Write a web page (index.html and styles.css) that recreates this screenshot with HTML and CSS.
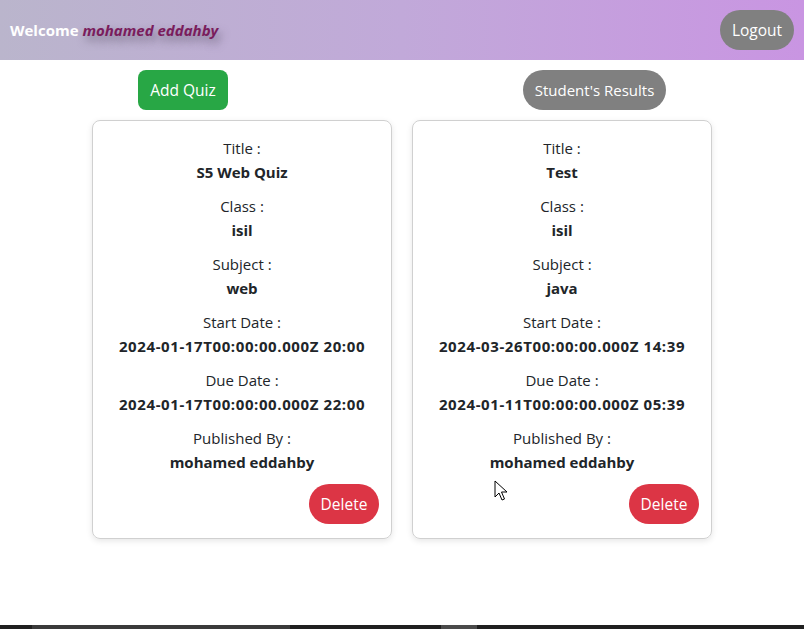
FILE: index.html
```html
<!DOCTYPE html>
<html>
<head>
<meta charset="utf-8">
<link rel="stylesheet" href="styles.css">
</head>
<body>
<div class="app">
  <header class="topbar">
    <div class="welcome">Welcome <span class="name">mohamed eddahby</span></div>
    <button class="btn btn-logout">Logout</button>
  </header>
  <main class="main">
    <div class="actions">
      <button class="btn btn-add">Add Quiz</button>
      <button class="btn btn-results">Student's Results</button>
    </div>
    <div class="cards">
      <div class="card">
        <div class="field"><div class="label">Title :</div><div class="value">S5 Web Quiz</div></div>
        <div class="field"><div class="label">Class :</div><div class="value">isil</div></div>
        <div class="field"><div class="label">Subject :</div><div class="value">web</div></div>
        <div class="field"><div class="label">Start Date :</div><div class="value date">2024-01-17T00:00:00.000Z 20:00</div></div>
        <div class="field"><div class="label">Due Date :</div><div class="value date">2024-01-17T00:00:00.000Z 22:00</div></div>
        <div class="field"><div class="label">Published By :</div><div class="value">mohamed eddahby</div></div>
        <div class="card-foot"><button class="btn btn-delete">Delete</button></div>
      </div>
      <div class="card">
        <div class="field"><div class="label">Title :</div><div class="value">Test</div></div>
        <div class="field"><div class="label">Class :</div><div class="value">isil</div></div>
        <div class="field"><div class="label">Subject :</div><div class="value">java</div></div>
        <div class="field"><div class="label">Start Date :</div><div class="value date">2024-03-26T00:00:00.000Z 14:39</div></div>
        <div class="field"><div class="label">Due Date :</div><div class="value date">2024-01-11T00:00:00.000Z 05:39</div></div>
        <div class="field"><div class="label">Published By :</div><div class="value">mohamed eddahby</div></div>
        <div class="card-foot"><button class="btn btn-delete">Delete</button></div>
      </div>
    </div>
    <svg class="cursor" width="14" height="22" viewBox="0 0 14 22"><path d="M1 1 L1 17 L5 13 L8 20 L10.5 19 L7.5 12 L13 12 Z" fill="#fff" stroke="#000" stroke-width="1" stroke-linejoin="miter"/></svg>
  </main>
  <div class="taskbar">
    <span class="seg seg-a"></span>
    <span class="seg seg-b"></span>
  </div>
</div>
</body>
</html>
```

FILE: styles.css
```css
* { box-sizing: border-box; }
html, body { margin: 0; padding: 0; }
body {
  font-family: "Open Sans", "Noto Sans", sans-serif;
  color: #212529;
  background: #fff;
}
.app {
  width: 804px;
  height: 629px;
  display: flex;
  flex-direction: column;
  overflow: hidden;
}
.topbar {
  height: 60px;
  flex: 0 0 60px;
  display: flex;
  align-items: center;
  justify-content: space-between;
  padding: 0 10px;
  background: linear-gradient(90deg, #bab5cc 0%, #c1a9d9 50%, #c995e2 100%);
}
.welcome {
  color: #fff;
  font-weight: 700;
  font-size: 15px;
}
.name {
  color: #7a1c5c;
  font-style: italic;
  text-shadow: 3px 5px 9px rgba(80, 70, 90, 0.6);
}
.btn {
  font-family: inherit;
  border: none;
  color: #fff;
  font-size: 15.5px;
  height: 40px;
  cursor: pointer;
  padding: 0;
  white-space: nowrap;
}
.btn-logout {
  background: #808080;
  border-radius: 20px;
  width: 74px;
}
.main {
  flex: 1;
  position: relative;
}
.actions {
  margin-top: 10px;
  padding: 0 138px;
  display: flex;
  justify-content: space-between;
}
.btn-add {
  background: #28a745;
  border-radius: 8px;
  width: 90px;
}
.btn-results {
  background: #808080;
  border-radius: 20px;
  width: 143px;
  font-size: 15px;
}
.cards {
  display: flex;
  justify-content: center;
  gap: 20px;
  margin-top: 10px;
}
.card {
  width: 300px;
  height: 419px;
  border: 1px solid #d0d0d0;
  border-radius: 8px;
  box-shadow: 0 2px 6px rgba(0, 0, 0, 0.10);
  padding: 15px 11px 14px;
  text-align: center;
  font-size: 15px;
  display: flex;
  flex-direction: column;
}
.field {
  margin-bottom: 10px;
  line-height: 24px;
}
.label { font-weight: 400; }
.value { font-weight: 700; }
.date { letter-spacing: 0.6px; }
.card-foot {
  display: flex;
  justify-content: flex-end;
}
.btn-delete {
  background: #dc3545;
  border-radius: 20px;
  width: 70px;
  margin-right: 1px;
}
.cursor {
  position: absolute;
  left: 494px;
  top: 420px;
}
.taskbar {
  flex: 0 0 4px;
  height: 4px;
  background: #202020;
  display: flex;
}
.seg { display: block; height: 4px; }
.seg-a { margin-left: 32px; width: 258px; background: #3a3a3a; }
.seg-b { margin-left: 151px; width: 36px; background: #4a4a4a; }
```
